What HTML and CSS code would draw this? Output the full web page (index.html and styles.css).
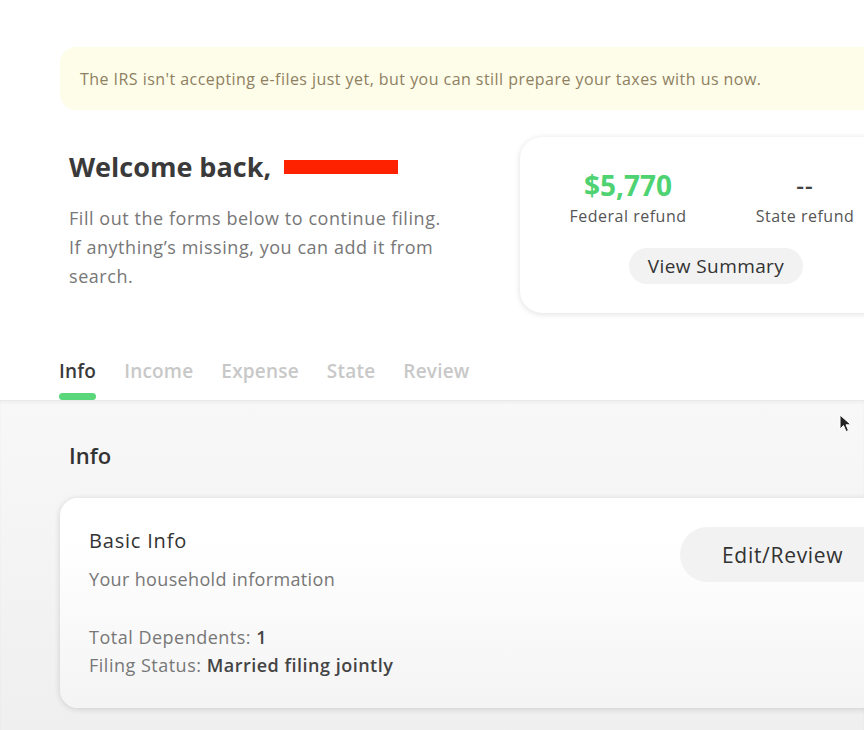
FILE: index.html
```html
<!DOCTYPE html>
<html>
<head>
<meta charset="utf-8">
<link rel="stylesheet" href="styles.css">
</head>
<body>
<div class="page">
  <div class="banner">The IRS isn't accepting e-files just yet, but you can still prepare your taxes with us now.</div>

  <div class="top">
    <div class="welcome">
      <h1 class="title">Welcome back, <span class="redact" aria-hidden="true"></span></h1>
      <p class="lead">Fill out the forms below to continue filing.<br>If anything’s missing, you can add it from<br>search.</p>
    </div>
    <div class="refund-card">
      <div class="refunds">
        <div class="refund">
          <div class="amount green">$5,770</div>
          <div class="label">Federal refund</div>
        </div>
        <div class="refund">
          <div class="amount dash">--</div>
          <div class="label">State refund</div>
        </div>
      </div>
      <div class="summary-btn">View Summary</div>
    </div>
  </div>

  <nav class="tabs">
    <div class="tab active">Info</div>
    <div class="tab">Income</div>
    <div class="tab">Expense</div>
    <div class="tab">State</div>
    <div class="tab">Review</div>
  </nav>

  <section class="content">
    <h2 class="section-title">Info</h2>
    <div class="info-card">
      <div class="info-text">
        <div class="card-title">Basic Info</div>
        <div class="card-sub">Your household information</div>
        <div class="facts">
          <div>Total Dependents: <b>1</b></div>
          <div>Filing Status: <b>Married filing jointly</b></div>
        </div>
      </div>
      <div class="edit-btn">Edit/Review</div>
    </div>
    <svg class="cursor" width="14" height="20" viewBox="0 0 14 20"><path d="M1 1 L1 15 L4.5 11.5 L7 17.5 L9.5 16.5 L7 10.8 L12 10.8 Z" fill="#222" stroke="#fff" stroke-width="1"/></svg>
  </section>
</div>
</body>
</html>
```
FILE: styles.css
```css
* { box-sizing: border-box; }
html, body { margin: 0; padding: 0; }
body {
  width: 864px;
  height: 730px;
  overflow: hidden;
  background: #fff;
  font-family: "Open Sans", Lato, sans-serif;
  color: #333;
}
.page { width: 864px; }

.banner {
  margin: 47px 0 0 60px;
  width: 860px;
  height: 63px;
  background: #fdfde9;
  border-radius: 16px 0 0 16px;
  padding-left: 20px;
  display: flex;
  align-items: center;
  font-size: 16px;
  letter-spacing: 0.45px;
  color: #8f8062;
  white-space: nowrap;
}

.top {
  display: flex;
  margin-top: 27px;
  height: 177px;
}
.welcome { padding-left: 69px; width: 520px; flex-shrink: 0; }
.title {
  margin: 14px 0 0;
  font-size: 27px;
  font-weight: 700;
  color: #3a3a3a;
  line-height: 32px;
  white-space: nowrap;
}
.redact {
  background: #ff2200;
  display: inline-block;
  height: 14px;
  vertical-align: 3px;
  width: 114px;
  margin-left: 6px;
}
.lead {
  margin: 21px 0 0;
  font-size: 18px;
  letter-spacing: 0.55px;
  line-height: 29px;
  color: #777;
  white-space: nowrap;
}

.refund-card {
  flex-shrink: 0;
  width: 400px;
  height: 176px;
  border-radius: 22px;
  background: #fff;
  box-shadow: 0 1px 6px rgba(0,0,0,0.13);
  padding-top: 32px;
  padding-left: 48px;
}
.refunds { display: flex; }
.refund { display: flex; flex-direction: column; align-items: center; width: 120px; white-space: nowrap; }
.refund + .refund { margin-left: 57px; }
.amount {
  font-size: 28px;
  font-weight: 700;
  line-height: 32px;
  color: #444;
}
.amount.green { color: #4fd372; }
.amount.dash { font-weight: 600; font-size: 24px; letter-spacing: 1px; }
.label { font-size: 16px; letter-spacing: 0.5px; color: #555; margin-top: 4px; }
.summary-btn {
  margin: 21px 0 0 61px;
  width: 174px;
  height: 36px;
  border-radius: 18px;
  background: #f2f2f2;
  display: flex;
  align-items: center;
  justify-content: center;
  font-size: 19px;
  letter-spacing: 0.4px;
  color: #333;
  white-space: nowrap;
}

.tabs {
  display: flex;
  gap: 28px;
  padding-left: 59px;
  height: 86px;
  padding-top: 45px;
}
.tab {
  font-size: 19px;
  letter-spacing: 0.2px;
  color: #c8c8c8;
  font-weight: 600;
  height: 41px;
  line-height: 24px;
  position: relative;
}
.tab.active { color: #3a3a3a; }
.tab.active::after {
  content: "";
  position: absolute;
  left: 0; right: 0; bottom: 0;
  height: 7px;
  border-radius: 4px;
  background: #5ad67b;
}

.content {
  position: relative;
  height: 340px;
  background: linear-gradient(#f8f8f8, #efefef);
  border-top: 1px solid #eaeaea;
  box-shadow: inset 0 2px 3px rgba(0,0,0,0.04);
  padding-top: 41px;
}
.section-title {
  margin: 0 0 30px 69px;
  font-size: 22px;
  font-weight: 600;
  line-height: 26px;
  color: #333;
}
.info-card {
  margin-left: 60px;
  width: 860px;
  height: 210px;
  border-radius: 18px;
  background: linear-gradient(#ffffff 20%, #f4f4f4);
  box-shadow: 0 1px 6px rgba(0,0,0,0.15);
  display: flex;
  justify-content: space-between;
  padding: 30px 0 0 29px;
  white-space: nowrap;
}
.card-title { font-size: 20px; letter-spacing: 0.8px; color: #333; line-height: 26px; font-weight: 500; }
.card-sub { font-size: 18px; letter-spacing: 0.35px; color: #777; margin-top: 13px; }
.facts { margin-top: 32px; font-size: 18px; letter-spacing: 0.5px; color: #777; line-height: 28px; }
.facts b { color: #444; font-weight: 600; }
.edit-btn {
  width: 240px;
  height: 55px;
  border-radius: 28px 0 0 28px;
  background: #f2f2f2;
  display: flex;
  align-items: center;
  padding-left: 42px;
  font-size: 21px;
  letter-spacing: 0.7px;
  color: #333;
  margin-top: -1px;
}
.cursor { position: absolute; left: 839px; top: 13px; }
```
